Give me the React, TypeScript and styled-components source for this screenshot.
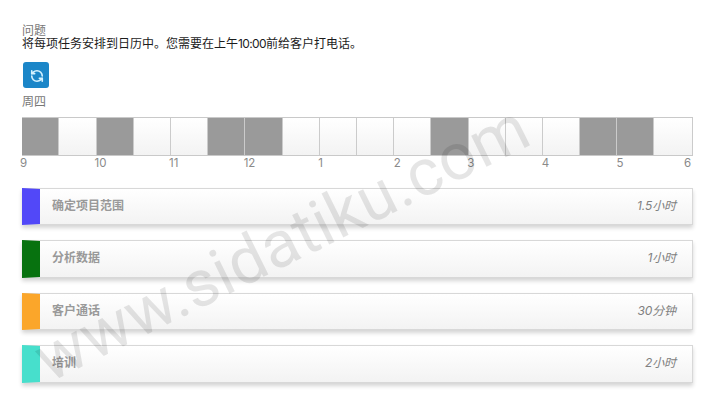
import React from "react";
import styled, { createGlobalStyle } from "styled-components";
import { RefreshCcw } from "lucide-react";

const Global = createGlobalStyle`
  * { box-sizing: border-box; }
  body {
    margin: 0;
    background: #fff;
    color: #8c8c8c;
    font-family: Inter, "Noto Sans CJK SC", sans-serif;
    font-size: 12px;
    line-height: 14px;
  }
`;

const Page = styled.main`
  position: relative;
  width: 716px;
  height: 411px;
  padding: 24px 24px 0 22px;
  overflow: hidden;
`;

const Heading = styled.div`
  height: 13px;
  line-height: 13px;
  color: #777;
`;

const Instruction = styled.p`
  margin: 0;
  height: 25px;
  line-height: 13px;
  color: #1c1c1c;
  white-space: nowrap;
`;

const Digits = styled.span`
  letter-spacing: -0.6px;
`;

const ResetButton = styled.button`
  display: flex;
  align-items: center;
  justify-content: center;
  width: 26px;
  height: 26px;
  margin: 0 0 7px 1px;
  padding: 2px 0 0 2px;
  border: 0;
  border-radius: 3px;
  background: #1b86c8;
  color: #d5f2ff;
`;

const Day = styled.div`
  height: 22px;
  color: #777;
`;

const Slots = styled.div`
  display: grid;
  grid-template-columns: 37px 38px repeat(3, 37px) 37px 38px repeat(4, 37px) 38px repeat(5, 37px) 39px;
  width: 671px;
  height: 39px;
  border: solid #c9c9c9;
  border-width: 1px 0;
`;

const Slot = styled.div<{ $busy: boolean }>`
  border-right: 1px solid #cbcbcb;
  background: ${(p) => (p.$busy ? "#9a9a9a" : "linear-gradient(#fff, #f3f3f3)")};
`;

const Hours = styled.div`
  display: flex;
  justify-content: space-between;
  width: 671px;
  height: 32px;
  color: #8a8a8a;
  font-size: 11.5px;
`;

const Hour = styled.span<{ $shift: number }>`
  width: 0;
  margin-left: ${(p) => p.$shift}px;
  margin-right: ${(p) => -p.$shift}px;
  white-space: nowrap;
`;

const Tasks = styled.div`
  display: grid;
  grid-template-rows: 37px 38px 37px 38px;
  row-gap: 15px;
  width: 671px;
`;

const Task = styled.div`
  display: flex;
  align-items: center;
  padding: 0 16px 2px 0;
  border: 1px solid #d8d8d8;
  border-left: 0;
  background: linear-gradient(#fff, #f3f3f3);
  box-shadow: 0 3px 4px rgba(0, 0, 0, 0.17);
`;

const Swatch = styled.span<{ $color: string }>`
  align-self: stretch;
  width: 18px;
  margin: -1px 12px -3px 0;
  background: ${(p) => p.$color};
  clip-path: polygon(0 0, 100% 1px, 100% calc(100% - 1px), 0 100%);
`;

const TaskName = styled.span`
  flex: 1;
  color: #999;
  font-weight: 600;
`;

const Duration = styled.em`
  color: #808080;
  font-style: italic;
  letter-spacing: -0.1px;
`;

const Watermark = styled.svg`
  position: absolute;
  inset: 0;
  pointer-events: none;
`;

const busy = new Set([0, 2, 5, 6, 11, 15, 16]);

const hours = [
  ["9", -2], ["10", -2], ["11", -2], ["12", -2], ["1", -2],
  ["2", -1], ["3", -2], ["4", -2], ["5", -2], ["6", -9],
] as const;

const tasks = [
  { name: "确定项目范围", time: "1.5小时", color: "#5248f8" },
  { name: "分析数据", time: "1小时", color: "#07720f" },
  { name: "客户通话", time: "30分钟", color: "#fba62a" },
  { name: "培训", time: "2小时", color: "#47dfcc" },
];

export default function App() {
  return (
    <>
      <Global />
      <Page>
        <Heading>问题</Heading>
        <Instruction>
          将每项任务安排到日历中。您需要在上午<Digits>10:00</Digits>前给客户打电话。
        </Instruction>
        <ResetButton aria-label="重置">
          <RefreshCcw size={14} strokeWidth={2.8} />
        </ResetButton>
        <Day>周四</Day>
        <Slots>
          {Array.from({ length: 18 }, (_, i) => (
            <Slot key={i} $busy={busy.has(i)} />
          ))}
        </Slots>
        <Hours>
          {hours.map(([label, shift]) => (
            <Hour key={label} $shift={shift}>{label}</Hour>
          ))}
        </Hours>
        <Tasks>
          {tasks.map((t) => (
            <Task key={t.name}>
              <Swatch $color={t.color} />
              <TaskName>{t.name}</TaskName>
              <Duration>{t.time}</Duration>
            </Task>
          ))}
        </Tasks>
        <Watermark width="716" height="411">
          <text
            transform="translate(49 383) rotate(-26.3)"
            textLength="541"
            fontFamily="Roboto, sans-serif"
            fontSize="65.5"
            fill="#000"
            fillOpacity="0.1"
          >
            www.sidatiku.com
          </text>
        </Watermark>
      </Page>
    </>
  );
}
